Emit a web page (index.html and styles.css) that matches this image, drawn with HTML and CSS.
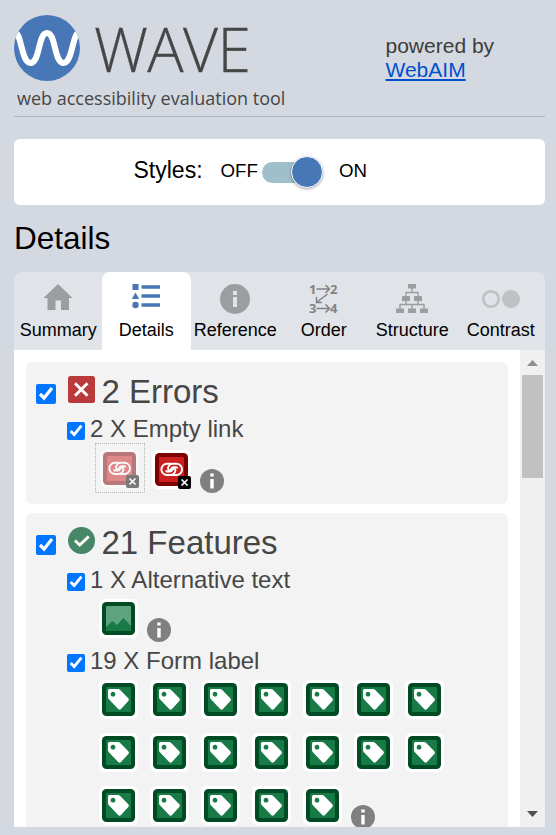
FILE: index.html
```html
<!DOCTYPE html>
<html lang="en">
<head>
<meta charset="utf-8">
<title>WAVE Details</title>
<link rel="stylesheet" href="styles.css">
</head>
<body>
<svg class="defs" width="0" height="0">
  <symbol id="tag" viewBox="0 0 39 39">
    <rect width="39" height="39" rx="6" fill="#fff"/>
    <rect x="3" y="3" width="33" height="33" rx="4.5" fill="#004b24"/>
    <rect x="7" y="7" width="25" height="25" rx="1" fill="#177a47"/>
    <path fill="#fff" fill-rule="evenodd" d="M10.500 9H19q1.300 0 2.200.900L29.300 18.300q1.400 1.400 0 2.800L22 29q-1.400 1.400-2.800 0L9.900 19.300Q9 18.300 9 17V10.500Q9 9 10.500 9ZM14 11.800a2.400 2.400 0 1 0 .01 0Z"/>
  </symbol>
  <symbol id="alt" viewBox="0 0 39 39">
    <rect width="39" height="39" rx="6" fill="#fff"/>
    <rect x="3" y="3" width="33" height="33" rx="4.500" fill="#004b24"/>
    <rect x="7" y="7" width="25" height="25" rx="1" fill="#5fa27e"/>
    <path fill="#177a47" d="M7 28l6.500-6 4.500 4 6.500-7 7.500 8v4q0 1-1 1H8q-1 0-1-1Z"/>
  </symbol>
  <symbol id="info" viewBox="0 0 24 24">
    <circle cx="12" cy="12" r="12" fill="#808080"/>
    <path fill="#fff" d="M10.300 4.500h3.400v3h-3.400zM10.300 10h3.400v9.500h-3.400z"/>
  </symbol>
  <symbol id="link" viewBox="0 0 40 40">
    <rect width="39" height="39" rx="6" fill="#fff"/>
    <rect x="3" y="3" width="33" height="33" rx="4.500" fill="#7e0000"/>
    <rect x="7" y="7" width="25" height="25" rx="1" fill="#cb2020"/>
    <g fill="none" stroke="#fff" stroke-width="1.900" stroke-linecap="round">
      <path id="loop" d="M19 13.800H15a5.500 5.500 0 0 0 0 11.200H18.500c3 0 5-2.500 4.900-5q-.1-1.500-1.600-1.500c-1.600 0-1.300 3-4 3H15.500a2.200 2.200 0 0 1-1.300-.4"/>
      <use href="#loop" transform="rotate(180 19.700 19.400)"/>
    </g>
    <rect x="26" y="26" width="13" height="13" rx="2" fill="#000"/>
    <path d="M29.500 29.500l6 6m0-6l-6 6" stroke="#fff" stroke-width="1.700"/>
  </symbol>
</svg>

<header class="header">
  <div class="brand">
    <div class="logo">
      <svg width="66" height="66" viewBox="0 0 66 66">
        <clipPath id="disc"><circle cx="33" cy="33" r="33"/></clipPath>
        <circle cx="33" cy="33" r="33" fill="#4777b6"/>
        <path clip-path="url(#disc)" d="M0 17C8 17 7 48 16.500 48S24 18 33 18 40 48 49.500 48 58 17 66 17" fill="none" stroke="#fff" stroke-width="6"/>
      </svg>
      <span class="wordmark">WAVE</span>
    </div>
    <div class="tagline">web accessibility evaluation tool</div>
  </div>
  <div class="powered">powered by<br><a href="#">WebAIM</a></div>
</header>

<div class="styles-card">
  <span class="styles-label">Styles:</span>
  <span class="off">OFF</span>
  <span class="switch"><span class="knob"></span></span>
  <span class="on">ON</span>
</div>

<h2 class="title">Details</h2>

<nav class="tabs">
  <div class="tab">
    <svg width="30" height="30" viewBox="0 0 30 30"><path fill="#9b9ea1" d="M15 0L.500 14H4.500v12h8v-9.500h5.500V26h8V14h3.500Z"/></svg>
    <span>Summary</span>
  </div>
  <div class="tab active">
    <svg width="30" height="30" viewBox="0 0 30 30"><g fill="#4777b6"><path d="M1.500 0h6v6h-6zM4.500 8.500l3.700 6.500H.800z"/><circle cx="4.500" cy="21" r="3.200"/><path d="M10.500 1.300h18.500v3.400H10.500zM10.500 10.300h18.500v3.400H10.500zM10.500 19.300h18.500v3.400H10.500z"/></g></svg>
    <span>Details</span>
  </div>
  <div class="tab">
    <svg width="30" height="30" viewBox="0 0 30 30"><circle cx="15" cy="15" r="15" fill="#9b9ea1"/><path fill="#e0e3e7" d="M13 7h4v4h-4zM13 13h4v10h-4z"/></svg>
    <span>Reference</span>
  </div>
  <div class="tab">
    <svg class="order-icon" width="30" height="30" viewBox="0 0 30 30"><g class="num" fill="#808386"><text x="0" y="9.500">1</text><text x="21" y="9.500">2</text><text x="0" y="29">3</text><text x="21" y="29">4</text></g><g fill="none" stroke="#808386" stroke-width="1.500"><path d="M7.500 5H20M16.500 1l4 4-4 4M7.500 24.500H20M16.500 20.500l4 4-4 4M18.500 10L7.500 18.500M7.500 13V18.500H13"/></g></svg>
    <span>Order</span>
  </div>
  <div class="tab">
    <svg width="32" height="30" viewBox="0 0 32 30"><g fill="#9b9ea1"><path d="M12 0h8v4.500h-8zM6 12h8v5H6zM18 12h8v5h-8zM0 24.500h8V29H0zM12 24.500h8V29h-8zM24 24.500h8V29h-8z"/></g><path d="M16 4v4.500M10 12.500V8.500h12v4M10 17v3.500M22 17v3.500M4 25v-4.500h24V25M16 20.500V25" fill="none" stroke="#9b9ea1" stroke-width="1.400"/></svg>
    <span>Structure</span>
  </div>
  <div class="tab">
    <svg width="38" height="30" viewBox="0 0 38 30"><circle cx="9" cy="15" r="7.700" fill="none" stroke="#bfc2c5" stroke-width="2.700"/><circle cx="29" cy="15" r="9" fill="#bfc2c5"/></svg>
    <span>Contrast</span>
  </div>
</nav>

<main class="panel">
  <div class="groups">
    <section class="group errors">
      <h3 class="group-head">
        <input type="checkbox" checked>
        <svg width="27" height="27" viewBox="0 0 27 27"><rect width="27" height="27" rx="2.500" fill="#ba3a3a"/><path d="M7 7.200l12.500 12.500M19.500 7.200L7 19.700" stroke="#fff" stroke-width="2.900"/></svg>
        <span>2 Errors</span>
      </h3>
      <div class="type"><input type="checkbox" checked><span>2 X Empty link</span></div>
      <div class="link-icons">
        <span class="hidden-item"><svg width="40" height="40"><use href="#link"/></svg></span>
        <svg class="link-item" width="40" height="40"><use href="#link"/></svg>
        <svg class="info" width="24" height="24"><use href="#info"/></svg>
      </div>
    </section>

    <section class="group">
      <h3 class="group-head">
        <input type="checkbox" checked>
        <svg width="27" height="27" viewBox="0 0 27 27"><circle cx="13.500" cy="13.500" r="13.500" fill="#478768"/><path d="M7 13.500l4.700 4.500 9-8.500" fill="none" stroke="#fff" stroke-width="2.900"/></svg>
        <span>21 Features</span>
      </h3>
      <div class="type"><input type="checkbox" checked><span>1 X Alternative text</span></div>
      <div class="icons single">
        <svg class="item" width="39" height="39"><use href="#alt"/></svg>
        <svg class="info" width="24" height="24"><use href="#info"/></svg>
      </div>
      <div class="type"><input type="checkbox" checked><span>19 X Form label</span></div>
      <div class="icons">
        <svg class="item" width="39" height="39"><use href="#tag"/></svg>
        <svg class="item" width="39" height="39"><use href="#tag"/></svg>
        <svg class="item" width="39" height="39"><use href="#tag"/></svg>
        <svg class="item" width="39" height="39"><use href="#tag"/></svg>
        <svg class="item" width="39" height="39"><use href="#tag"/></svg>
        <svg class="item" width="39" height="39"><use href="#tag"/></svg>
        <svg class="item" width="39" height="39"><use href="#tag"/></svg>
        <svg class="item" width="39" height="39"><use href="#tag"/></svg>
        <svg class="item" width="39" height="39"><use href="#tag"/></svg>
        <svg class="item" width="39" height="39"><use href="#tag"/></svg>
        <svg class="item" width="39" height="39"><use href="#tag"/></svg>
        <svg class="item" width="39" height="39"><use href="#tag"/></svg>
        <svg class="item" width="39" height="39"><use href="#tag"/></svg>
        <svg class="item" width="39" height="39"><use href="#tag"/></svg>
        <svg class="item" width="39" height="39"><use href="#tag"/></svg>
        <svg class="item" width="39" height="39"><use href="#tag"/></svg>
        <svg class="item" width="39" height="39"><use href="#tag"/></svg>
        <svg class="item" width="39" height="39"><use href="#tag"/></svg>
        <svg class="item" width="39" height="39"><use href="#tag"/></svg>
        <svg class="info" width="24" height="24"><use href="#info"/></svg>
      </div>
    </section>
  </div>
  <div class="scrollbar">
    <svg width="25" height="25" viewBox="0 0 25 25"><path d="M7 16h11l-5.500-6z" fill="#909090"/></svg>
    <div class="thumb"></div>
    <svg class="down" width="25" height="25" viewBox="0 0 25 25"><path d="M7 9h11l-5.500 6z" fill="#505050"/></svg>
  </div>
</main>
</body>
</html>
```

FILE: styles.css
```css
* { box-sizing: border-box; }
body {
  margin: 0;
  height: 835px;
  padding: 0 11px 0 14px;
  overflow: hidden;
  background: #d4d8e0;
  color: #000;
  font-family: "Liberation Sans", Arial, sans-serif;
}
svg { display: block; flex: none; }
.defs { position: absolute; }

.header {
  display: flex;
  height: 117px;
  border-bottom: 1px solid #aeb4b8;
  color: #464646;
}
.brand { width: 371.5px; padding-top: 15px; }
.logo { display: flex; height: 66px; }
.wordmark {
  margin-left: 14px;
  font: 300 60.500px/67px "Open Sans", sans-serif;
  letter-spacing: -.6px;
  -webkit-text-stroke: .3px #464646;
  white-space: nowrap;
}
.tagline {
  margin: 5px 0 0 3px;
  font: 400 18px/24px "Open Sans", sans-serif;
  white-space: nowrap;
}
.powered { padding-top: 34px; font-size: 21px; line-height: 24px; color: #3c3c3c; }
.powered a { color: #0050cd; }

.styles-card {
  display: flex;
  align-items: flex-start;
  height: 66px;
  margin-top: 22px;
  padding-left: 119.5px;
  border-radius: 6px;
  background: #fff;
  line-height: 62px;
}
.styles-label { width: 87px; font-size: 23px; }
.off { width: 41px; font-size: 18.7px; line-height: 64px; }
.on { margin-left: 16px; font-size: 18.7px; line-height: 64px; }
.switch {
  display: flex;
  justify-content: flex-end;
  align-items: center;
  width: 61.5px;
  height: 21px;
  margin-top: 22.5px;
  border-radius: 11px;
  background: #9fc0cb;
}
.knob {
  flex: none;
  width: 32px;
  height: 32px;
  border: 1px solid #fff;
  border-radius: 50%;
  background: #4777b6;
  box-shadow: 0 1px 3px rgba(0,0,0,.35);
}

.title { height: 67px; margin: 0; font-size: 31.500px; font-weight: 400; line-height: 66px; }

.tabs {
  display: grid;
  grid-template-columns: repeat(6, 1fr);
  height: 78px;
  border-radius: 8px 8px 0 0;
  background: #e0e3e7;
}
.tab {
  display: flex;
  flex-direction: column;
  align-items: center;
  padding-top: 12px;
  font-size: 18px;
  line-height: 32px;
}
.tab.active { margin: 0 .5px 0 -.5px; border-radius: 8px 8px 0 0; background: #fff; }
.order-icon { overflow: visible; }
.num { font: 700 13px "Open Sans", sans-serif; }

.panel { display: flex; height: 477px; overflow: hidden; background: #fff; }
.groups {
  display: flex;
  flex-direction: column;
  flex: 1;
  gap: 9px;
  padding: 12px 12px 0;
}
.group { flex: none; border-radius: 6px; background: #f3f3f3; color: #464646; }
.group.errors { height: 142px; }
.group input { flex: none; margin: 0; }
.group-head {
  display: flex;
  align-items: flex-start;
  height: 54px;
  margin: 0;
  padding-left: 10px;
  font-size: 33px;
  font-weight: 400;
  line-height: 59px;
}
.group-head input { width: 19.5px; height: 19.5px; margin-top: 22px; }
.group-head svg { margin: 14px 6.500px 0 12.5px; }
.type {
  display: flex;
  height: 26px;
  padding-left: 41px;
  font-size: 24px;
  line-height: 26px;
}
.type input { width: 18px; height: 18px; margin: 6px 5px 0 0; }
.link-icons { display: flex; padding: 1px 0 0 69px; }
.hidden-item { width: 50px; height: 50px; padding: 5px 0 0 4px; border: 1px dotted #b4b4b4; }
.hidden-item svg { opacity: .5; }
.link-item { margin: 7px 0 0 7px; }
.link-icons .info { margin: 26px 0 0 8px; }
.icons { display: flex; flex-wrap: wrap; width: 430px; padding-left: 73px; }
.icons.single { height: 55px; }
.item { margin: 6px 12px 8px 0; }
.icons .info { margin: 25px 0 0 -3px; }

.scrollbar {
  display: flex;
  flex-direction: column;
  width: 25px;
  background: #f0f0f0;
}
.thumb { height: 103px; margin: 0 2px; background: #c1c1c1; }
.down { margin-top: auto; }
```
